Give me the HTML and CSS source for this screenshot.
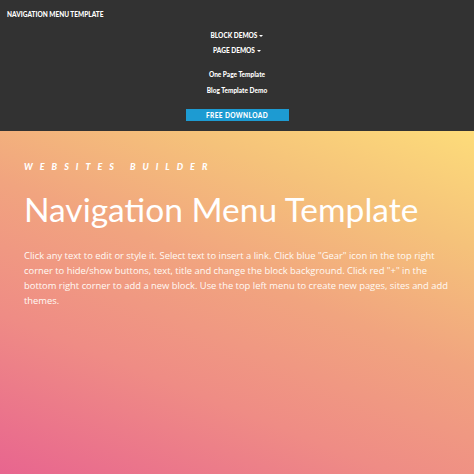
FILE: index.html
```html
<!DOCTYPE html>
<html>
<head>
<meta charset="utf-8">
<link rel="stylesheet" href="styles.css">
</head>
<body>
<header class="topbar">
  <div class="brand">NAVIGATION MENU TEMPLATE</div>
  <nav class="menu">
    <ul class="menu-list">
      <li class="menu-item">BLOCK DEMOS <span class="caret"></span></li>
      <li class="menu-item">PAGE DEMOS <span class="caret"></span></li>
    </ul>
    <ul class="link-list">
      <li class="link-item">One Page Template</li>
      <li class="link-item">Blog Template Demo</li>
    </ul>
    <a class="btn">FREE DOWNLOAD</a>
  </nav>
</header>
<section class="hero">
  <div class="kicker">WEBSITES BUILDER</div>
  <h1 class="title">Navigation Menu Template</h1>
  <p class="lead">Click any text to edit or style it. Select text to insert a link. Click blue "Gear" icon in the top right corner to hide/show buttons, text, title and change the block background. Click red "+" in the bottom right corner to add a new block. Use the top left menu to create new pages, sites and add themes.</p>
</section>
</body>
</html>
```
FILE: styles.css
```css
html, body {
  margin: 0;
  padding: 0;
  height: 100%;
}
body {
  font-family: "Open Sans", "Liberation Sans", sans-serif;
  background: #333;
  overflow: hidden;
}
.topbar {
  background: #323232;
  height: 131px;
  box-sizing: border-box;
  padding-top: 10px;
  color: #fff;
}
.brand {
  font-family: "Lato", sans-serif;
  font-weight: 900;
  font-size: 6.5px;
  padding-left: 7px;
  line-height: 9px;
}
.menu {
  display: flex;
  flex-direction: column;
  align-items: center;
  margin-top: 12px;
}
.menu-list, .link-list {
  list-style: none;
  margin: 0;
  padding: 0;
  display: flex;
  flex-direction: column;
  align-items: center;
}
.menu-item {
  font-family: "Lato", sans-serif;
  font-weight: 900;
  font-size: 6.5px;
  line-height: 9px;
  margin-bottom: 6px;
  display: flex;
  align-items: center;
  gap: 2px;
}
.caret {
  display: inline-block;
  width: 0;
  height: 0;
  border-left: 2px solid transparent;
  border-right: 2px solid transparent;
  border-top: 2px solid #fff;
}
.link-list {
  margin-top: 9px;
}
.link-item {
  font-family: "Lato", sans-serif;
  font-weight: 900;
  font-size: 6.5px;
  line-height: 9px;
  margin-bottom: 7px;
}
.btn {
  margin-top: 7px;
  width: 103px;
  height: 12px;
  background: #1d9bd2;
  color: #fff;
  font-family: "Lato", sans-serif;
  font-weight: 900;
  font-size: 6.5px;
  letter-spacing: 0.4px;
  display: flex;
  align-items: center;
  justify-content: center;
}
.hero {
  height: 343px;
  box-sizing: border-box;
  padding: 30px 24px 0 24px;
  background: linear-gradient(22deg, #e8658f 0%, #ef8c85 30%, #f1a47f 55%, #f5c27a 78%, #fddc7a 100%);
  color: #fff;
}
.kicker {
  font-family: "Lato", sans-serif;
  font-weight: 900;
  font-style: italic;
  font-size: 9px;
  letter-spacing: 7px;
  line-height: 12px;
}
.title {
  font-family: "Lato", sans-serif;
  font-weight: 400;
  font-size: 33.5px;
  line-height: 40px;
  margin: 16px 0 0 0;
}
.lead {
  font-family: "Open Sans", sans-serif;
  font-weight: 500;
  font-size: 9.4px;
  line-height: 15px;
  margin: 19px 0 0 0;
  color: #fffaf5;
}
```
